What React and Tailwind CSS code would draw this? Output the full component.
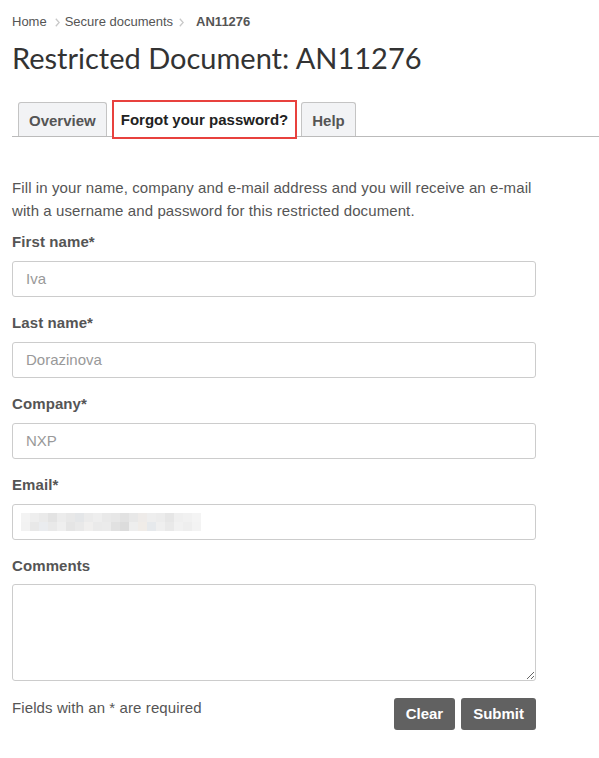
const blurTop = ['#f3f3f3', '#eeeeee', '#eaeaea', '#e3e3e3', '#ececec', '#e8e8e8', '#e4e6e8', '#ebebeb', '#eeeeee', '#e9e9e9', '#e7e7e7', '#e2e2e2', '#e8e8e8', '#eeebe9', '#eeeeee', '#ececec', '#e6e6e6', '#efefef', '#f1f1f1', '#f4f4f4'];
const blurBottom = ['#f2f2f2', '#e8e8e8', '#eaecef', '#e9e9e9', '#efefef', '#e5e5e5', '#e9e9e9', '#f0efee', '#eaeaea', '#ebebeb', '#e1e1e1', '#dcdcdc', '#eeeeee', '#f0ece8', '#e6e9ec', '#efefef', '#e9e9e9', '#f1f1f1', '#eeeeee', '#f3f3f3'];

const Chevron = ({ className }) => (
  <svg width="5" height="9" viewBox="0 0 5 9" className={className}>
    <polyline points="0.8,0.8 4.2,4.5 0.8,8.2" fill="none" stroke="#c8c8c8" strokeWidth="1.3" />
  </svg>
);

const Field = ({ label, value, blurred }) => (
  <div className="mb-[14px]">
    <div className="text-[15px] leading-[23px] font-bold tracking-[0.1px] text-[#555] mb-[8px]">{label}</div>
    <div className="h-[36px] w-[524px] border border-[#cccccc] rounded-[3px] bg-white flex items-center px-[13px] text-[15px] text-[#999]">
      {blurred ? (
        <div className="ml-[-5px] flex flex-col">
          <div className="flex">
            {blurTop.map((c, i) => (
              <div key={i} className="w-[9px] h-[9px]" style={{ background: c }} />
            ))}
          </div>
          <div className="flex">
            {blurBottom.map((c, i) => (
              <div key={i} className="w-[9px] h-[9px]" style={{ background: c }} />
            ))}
          </div>
        </div>
      ) : (
        value
      )}
    </div>
  </div>
);

const App = () => {
  return (
    <div className="w-[599px] min-h-[758px] bg-white px-3 pt-[14px] font-['Liberation_Sans',Arial,sans-serif] text-[#555]">
      {/* Breadcrumb */}
      <div className="flex items-center text-[13px] leading-[16px] text-[#555]">
        <span>Home</span>
        <Chevron className="ml-[8px] mr-[5px]" />
        <span>Secure documents</span>
        <Chevron className="ml-[6px] mr-[12px]" />
        <span className="font-bold">AN11276</span>
      </div>

      {/* Title */}
      <h1 className="mt-[8px] font-['Lato',sans-serif] text-[29px] leading-[40px] text-[#333]">
        Restricted Document: AN11276
      </h1>

      {/* Tabs */}
      <div className="mt-[22px] -mr-3 flex items-end pl-[6px] border-b border-[#bbbbbb]">
        <div className="h-[34px] px-[10px] pt-[4px] flex items-center border border-b-0 border-[#c4c4c4] rounded-t-[3px] bg-[#f2f3f5] text-[15px] font-bold text-[#555]">
          Overview
        </div>
        <div className="relative z-10 ml-[5px] h-[39px] mb-[-3px] px-[7px] pt-[2px] flex items-center border-2 border-[#e8413e] bg-white text-[15px] font-bold text-[#222]">
          Forgot your password?
        </div>
        <div className="ml-[4px] h-[34px] px-[10px] pt-[4px] flex items-center border border-b-0 border-[#c4c4c4] rounded-t-[3px] bg-[#f2f3f5] text-[15px] font-bold text-[#555]">
          Help
        </div>
      </div>

      {/* Intro */}
      <p className="mt-[39px] text-[15px] leading-[23px] tracking-[0.1px] text-[#555] w-[545px]">
        Fill in your name, company and e-mail address and you will receive an e-mail with a username and password for this restricted document.
      </p>

      <div className="mt-[8px]">
        <Field label="First name*" value="Iva" />
        <Field label="Last name*" value="Dorazinova" />
        <Field label="Company*" value="NXP" />
        <Field label="Email*" blurred />
        <div>
          <div className="text-[15px] leading-[23px] font-bold tracking-[0.1px] text-[#555] mb-[7px]">Comments</div>
          <textarea className="block h-[97px] w-[524px] border border-[#cccccc] rounded-[3px] bg-white" />
        </div>
      </div>

      {/* Footer */}
      <div className="mt-[15px] w-[524px] flex justify-between items-start">
        <span className="text-[15px] leading-[23px] tracking-[0.1px] text-[#555]">Fields with an * are required</span>
        <div className="mt-[2px] flex gap-[6px]">
          <button className="h-[32px] px-[12px] rounded-[3px] bg-[#616161] text-white text-[15px] font-bold">Clear</button>
          <button className="h-[32px] px-[12px] rounded-[3px] bg-[#616161] text-white text-[15px] font-bold">Submit</button>
        </div>
      </div>
    </div>
  );
};

export default App;
